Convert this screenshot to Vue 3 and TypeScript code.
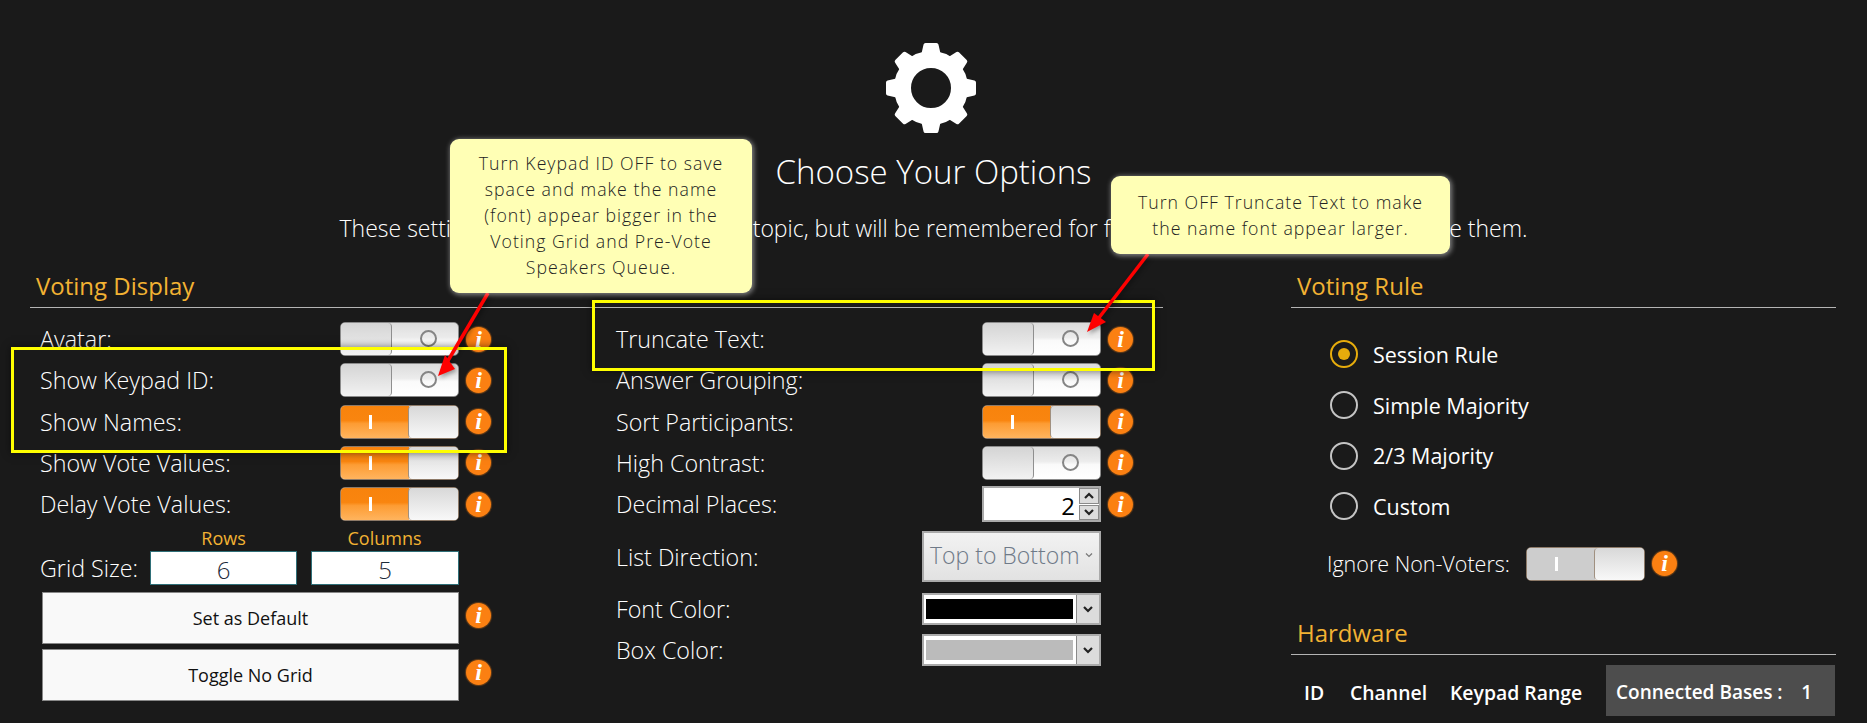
<script setup lang="ts">
interface Row {
  label: string
  state: 'on' | 'off'
}

const leftRows: Row[] = [
  { label: 'Avatar:', state: 'off' },
  { label: 'Show Keypad ID:', state: 'off' },
  { label: 'Show Names:', state: 'on' },
  { label: 'Show Vote Values:', state: 'on' },
  { label: 'Delay Vote Values:', state: 'on' },
]

const midRows: Row[] = [
  { label: 'Truncate Text:', state: 'off' },
  { label: 'Answer Grouping:', state: 'off' },
  { label: 'Sort Participants:', state: 'on' },
  { label: 'High Contrast:', state: 'off' },
]

const radios = ['Session Rule', 'Simple Majority', '2/3 Majority', 'Custom']
const teeth = [0, 45, 90, 135, 180, 225, 270, 315]
</script>

<template>
  <div class="page">
    <header class="head">
      <svg class="gear" viewBox="-47 -47 94 94" width="94" height="94">
        <path
          v-for="a in teeth"
          :key="a"
          :transform="`rotate(${a})`"
          d="M-8 -32 L-5.5 -43 H5.5 L8 -32 Z"
          fill="#fff"
          stroke="#fff"
          stroke-width="4"
          stroke-linejoin="round"
        />
        <circle r="28.5" fill="none" stroke="#fff" stroke-width="17" />
      </svg>
      <h1 class="title">Choose Your Options</h1>
      <p class="sub">These settings only apply to the current topic, but will be remembered for future topics until you next change them.</p>
    </header>

    <main class="main">
      <section class="display">
        <h2 class="sec">Voting Display</h2>
        <div class="cols">
          <div class="col-left">
            <div v-for="r in leftRows" :key="r.label" class="row">
              <span class="lbl">{{ r.label }}</span>
              <span class="toggle" :class="r.state">
                <span class="fill"><i class="bar"></i></span>
                <span class="ring"></span>
                <span class="knob"></span>
              </span>
              <span class="info">i</span>
            </div>
            <div class="grid-heads">
              <span>Rows</span>
              <span>Columns</span>
            </div>
            <div class="grid-size">
              <span class="lbl">Grid Size:</span>
              <span class="num">6</span>
              <span class="num">5</span>
            </div>
            <div class="btn-row">
              <button class="btn">Set as Default</button>
              <span class="info">i</span>
            </div>
            <div class="btn-row">
              <button class="btn">Toggle No Grid</button>
              <span class="info">i</span>
            </div>
          </div>

          <div class="col-mid">
            <div v-for="r in midRows" :key="r.label" class="row">
              <span class="lbl">{{ r.label }}</span>
              <span class="toggle" :class="r.state">
                <span class="fill"><i class="bar"></i></span>
                <span class="ring"></span>
                <span class="knob"></span>
              </span>
              <span class="info">i</span>
            </div>
            <div class="row row-num">
              <span class="lbl">Decimal Places:</span>
              <span class="spin">
                <span class="spin-val">2</span>
                <span class="spin-btns">
                  <span class="spin-btn">
                    <svg width="12" height="8" viewBox="0 0 12 8"><path d="M2 6 L6 2 L10 6" fill="none" stroke="#222" stroke-width="2.2" /></svg>
                  </span>
                  <span class="spin-btn">
                    <svg width="12" height="8" viewBox="0 0 12 8"><path d="M2 2 L6 6 L10 2" fill="none" stroke="#222" stroke-width="2.2" /></svg>
                  </span>
                </span>
              </span>
              <span class="info">i</span>
            </div>
            <div class="sel-row list-row">
              <span class="lbl">List Direction:</span>
              <span class="list-sel">
                <span>Top to Bottom</span>
                <svg width="8" height="6" viewBox="0 0 8 6"><path d="M1 1.5 L4 4.5 L7 1.5" fill="none" stroke="#777" stroke-width="1.2" /></svg>
              </span>
            </div>
            <div class="sel-row color-row">
              <span class="lbl">Font Color:</span>
              <span class="color-sel">
                <span class="swatch black"></span>
                <span class="drop">
                  <svg width="12" height="8" viewBox="0 0 12 8"><path d="M2 2 L6 6 L10 2" fill="none" stroke="#222" stroke-width="2.2" /></svg>
                </span>
              </span>
            </div>
            <div class="sel-row color-row box-row">
              <span class="lbl">Box Color:</span>
              <span class="color-sel">
                <span class="swatch gray"></span>
                <span class="drop">
                  <svg width="12" height="8" viewBox="0 0 12 8"><path d="M2 2 L6 6 L10 2" fill="none" stroke="#222" stroke-width="2.2" /></svg>
                </span>
              </span>
            </div>
          </div>
        </div>
      </section>

      <section class="rule">
        <h2 class="sec">Voting Rule</h2>
        <div class="radios">
          <div v-for="(r, i) in radios" :key="r" class="radio-row">
            <span class="radio" :class="{ checked: i === 0 }"></span>
            <span>{{ r }}</span>
          </div>
        </div>
        <div class="ignore">
          <span class="lbl">Ignore Non-Voters:</span>
          <span class="toggle on muted">
            <span class="fill"><i class="bar"></i></span>
            <span class="knob"></span>
          </span>
          <span class="info">i</span>
        </div>
        <h2 class="sec hw">Hardware</h2>
        <div class="hw-table">
          <span class="th">ID</span>
          <span class="th">Channel</span>
          <span class="th">Keypad Range</span>
          <div class="bases">
            <span>Connected Bases :</span>
            <span>1</span>
          </div>
        </div>
      </section>
    </main>

    <!-- annotations pasted over the screenshot -->
    <div class="mark mark-a"></div>
    <div class="mark mark-b"></div>
    <svg class="arrows" width="1867" height="723">
      <g fill="#f00" stroke="none" class="arrow-g">
        <line x1="488" y1="293" x2="446" y2="364" stroke="#f00" stroke-width="3.5" />
        <polygon points="438,376 445,355 455,369" />
        <line x1="1148" y1="254" x2="1098" y2="319" stroke="#f00" stroke-width="3.5" />
        <polygon points="1087,332 1094,313 1106,322" />
      </g>
    </svg>
    <div class="tip tip-a">Turn Keypad ID OFF to save space and make the name (font) appear bigger in the Voting Grid and Pre-Vote Speakers Queue.</div>
    <div class="tip tip-b">Turn OFF Truncate Text to make the name font appear larger.</div>
  </div>
</template>

<style>
html,
body {
  background: #1a1a1a;
}
</style>

<style scoped>
.page {
  position: relative;
  width: 1867px;
  height: 723px;
  overflow: hidden;
  box-sizing: border-box;
  padding-top: 41px;
  background: #1a1a1a;
  color: #fff;
  font-family: "Open Sans", "Noto Sans", sans-serif;
  font-weight: 300;
}

.head {
  text-align: center;
}
.gear {
  display: block;
  margin-left: 884px;
}
.title {
  margin: 15px 0 0;
  font-size: 33px;
  font-weight: 300;
  line-height: 44px;
}
.sub {
  margin: 19px 0 0;
  font-size: 23px;
  line-height: 30px;
}

.main {
  display: flex;
  margin: 25px 0 0 30px;
}
.display {
  width: 1133px;
}
.rule {
  width: 545px;
  margin-left: 128px;
}
.sec {
  margin: 0;
  height: 40px;
  padding-left: 6px;
  box-sizing: border-box;
  border-bottom: 1.5px solid #b4b4b4;
  color: #f2b233;
  font-size: 24px;
  font-weight: 400;
  line-height: 35px;
}

.cols {
  display: flex;
  padding: 14px 0 0 10px;
}
.col-left {
  width: 451px;
  margin-right: 125px;
}
.col-mid {
  width: 517px;
}

.row {
  display: flex;
  align-items: center;
  height: 34px;
  margin-bottom: 7.3px;
}
.row .lbl {
  flex: 1;
}
.lbl {
  font-size: 23.3px;
  white-space: nowrap;
}

.toggle {
  position: relative;
  display: block;
  width: 119px;
  height: 34px;
  box-sizing: border-box;
  border: 1.5px solid #8b8b8b;
  border-radius: 5px;
  overflow: hidden;
  background: linear-gradient(#dcdcdc 0%, #ececec 45%, #fafafa 55%, #fff 100%);
}
.toggle.on {
  border-color: #8d7a68;
}
.fill {
  display: none;
  position: absolute;
  left: 0;
  top: 0;
  bottom: 0;
  width: 68px;
  background: linear-gradient(#f8830c 0%, #f9850f 45%, #fd9c33 55%, #ffb45e 100%);
}
.on .fill {
  display: block;
}
.muted .fill {
  background: #cdcdcd;
}
.bar {
  position: absolute;
  left: 28px;
  top: 9px;
  width: 2.5px;
  height: 14px;
  background: #fff;
}
.ring {
  position: absolute;
  left: 79px;
  top: 7px;
  width: 17px;
  height: 17px;
  box-sizing: border-box;
  border: 2.5px solid #858585;
  border-radius: 50%;
}
.knob {
  position: absolute;
  left: 0;
  top: 0;
  bottom: 0;
  width: 51px;
  box-sizing: border-box;
  border-right: 1.5px solid #8f8f8f;
  border-radius: 0 4px 4px 0;
  background: linear-gradient(#d4d4d4, #f2f2f2);
}
.on .knob {
  left: 67px;
  right: 0;
  width: auto;
  border-right: 0;
  border-left: 1.5px solid #a09080;
  border-radius: 4px 0 0 4px;
  background: linear-gradient(#d8d8d8, #f8f8f8);
}

.info {
  flex: none;
  width: 25px;
  height: 25px;
  margin-left: 7px;
  border-radius: 50%;
  background: #fb8012;
  box-shadow: 0 0 1px 1px rgba(251, 128, 18, 0.35);
  color: #fff;
  font-family: "Liberation Serif", serif;
  font-size: 24px;
  font-style: italic;
  font-weight: 700;
  line-height: 25px;
  text-align: center;
}

.grid-heads {
  display: flex;
  margin-top: -1px;
  padding-left: 110px;
  height: 24px;
  color: #f2b233;
  font-size: 18px;
  font-weight: 400;
  line-height: 22px;
}
.grid-heads span {
  width: 147px;
  margin-right: 14px;
  text-align: center;
}
.grid-size {
  display: flex;
  align-items: center;
  gap: 14px;
}
.grid-size .lbl {
  width: 96px;
}
.num {
  width: 147px;
  height: 34px;
  box-sizing: border-box;
  border: 1px solid #2f6f78;
  background: #fff;
  color: #1c2a3a;
  font-size: 24px;
  line-height: 36px;
  text-align: center;
}
.num + .num {
  width: 148px;
}

.btn-row {
  display: flex;
  align-items: center;
  margin: 7px 0 0 2px;
  height: 52px;
}
.btn-row + .btn-row {
  margin-top: 5px;
}
.btn {
  width: 417px;
  height: 52px;
  box-sizing: border-box;
  padding: 0;
  border: 1px solid #888;
  background: #f9f9f9;
  color: #111;
  font-family: inherit;
  font-size: 18px;
  font-weight: 400;
}
.btn-row .info {
  margin: 0 0 6px 7px;
}

.row-num {
  height: 36px;
  margin: -1px 0 0;
}
.spin {
  position: relative;
  display: flex;
  width: 119px;
  height: 36px;
  box-sizing: border-box;
  border: 2px solid #aaa;
  background: #fff;
}
.spin-val {
  flex: 1;
  color: #000;
  font-size: 24px;
  font-weight: 400;
  line-height: 36px;
  text-align: right;
  padding-right: 4px;
}
.spin-btns {
  display: flex;
  flex-direction: column;
  gap: 1px;
  width: 20px;
}
.spin-btn {
  display: flex;
  flex: 1;
  align-items: center;
  justify-content: center;
  background: #dcdcdc;
  border: 1px solid #8a8a8a;
}

.sel-row {
  display: flex;
  align-items: center;
}
.sel-row .lbl {
  flex: none;
  width: 306px;
}
.list-row {
  margin-top: 9px;
  height: 51px;
}
.list-sel {
  display: flex;
  align-items: center;
  justify-content: space-between;
  width: 179px;
  height: 51px;
  box-sizing: border-box;
  padding: 0 6px 4px 6px;
  border: 2px solid #aaa;
  background: linear-gradient(#f2f2f2, #e2e2e2);
  color: #6f7a88;
  font-size: 23px;
  white-space: nowrap;
}
.color-row {
  margin-top: 11px;
  height: 32px;
}
.box-row {
  margin-top: 9px;
}
.color-sel {
  display: flex;
  width: 179px;
  height: 32px;
  box-sizing: border-box;
  border: 2px solid #aaa;
  background: #fff;
}
.swatch {
  flex: 1;
  margin: 4px 3px 4px 2px;
}
.black {
  background: #000;
}
.gray {
  background: #bbb;
}
.drop {
  display: flex;
  align-items: center;
  justify-content: center;
  width: 22px;
  background: #dcdcdc;
  border-left: 1px solid #8a8a8a;
}

.radios {
  padding: 21px 0 0 39px;
}
.radio-row {
  display: flex;
  align-items: center;
  height: 50.7px;
  gap: 15px;
  font-size: 21.5px;
  font-weight: 400;
}
.radio {
  position: relative;
  width: 28px;
  height: 28px;
  box-sizing: border-box;
  border: 2.5px solid #c4c4c4;
  border-radius: 50%;
}
.radio.checked {
  border-color: #e6ac0c;
}
.radio.checked::after {
  content: '';
  position: absolute;
  left: 5.5px;
  top: 5.5px;
  width: 12px;
  height: 12px;
  border-radius: 50%;
  background: #e6ac0c;
}
.ignore {
  display: flex;
  align-items: center;
  margin: 15px 0 0 36px;
  height: 34px;
}
.ignore .lbl {
  width: 199px;
  font-size: 21.5px;
}
.hw {
  margin-top: 34px;
}
.hw-table {
  display: grid;
  grid-template-columns: 46px 100px 156px 229px;
  padding: 10px 0 0 13px;
}
.th {
  padding-top: 15px;
  font-size: 19.4px;
  font-weight: 600;
  line-height: 26px;
  white-space: nowrap;
}
.bases {
  display: flex;
  justify-content: space-between;
  height: 51px;
  box-sizing: border-box;
  padding: 3px 23px 0 10px;
  background: #4d4d4d;
  font-size: 19px;
  font-weight: 600;
  line-height: 48px;
}

.mark {
  position: absolute;
  box-sizing: border-box;
  border: 3px solid #ff0;
  box-shadow: 0 0 8px rgba(0, 0, 0, 0.55);
}
.mark-a {
  left: 11px;
  top: 347px;
  width: 496px;
  height: 106px;
}
.mark-b {
  left: 592px;
  top: 300px;
  width: 563px;
  height: 71px;
}
.arrows {
  position: absolute;
  left: 0;
  top: 0;
  pointer-events: none;
}
.arrow-g {
  filter: drop-shadow(2px 2px 2px rgba(0, 0, 0, 0.35));
}
.tip {
  position: absolute;
  box-sizing: border-box;
  border-radius: 9px;
  background: #ffffb5;
  box-shadow: 1px 1px 5px 1px rgba(255, 255, 255, 0.45);
  color: #222;
  font-size: 17.7px;
  letter-spacing: 1px;
  line-height: 26px;
  text-align: center;
}
.tip-a {
  left: 450px;
  top: 139px;
  width: 302px;
  height: 154px;
  padding: 11px 20px;
}
.tip-b {
  left: 1111px;
  top: 176px;
  width: 339px;
  height: 78px;
  padding: 13px 20px;
}
</style>
